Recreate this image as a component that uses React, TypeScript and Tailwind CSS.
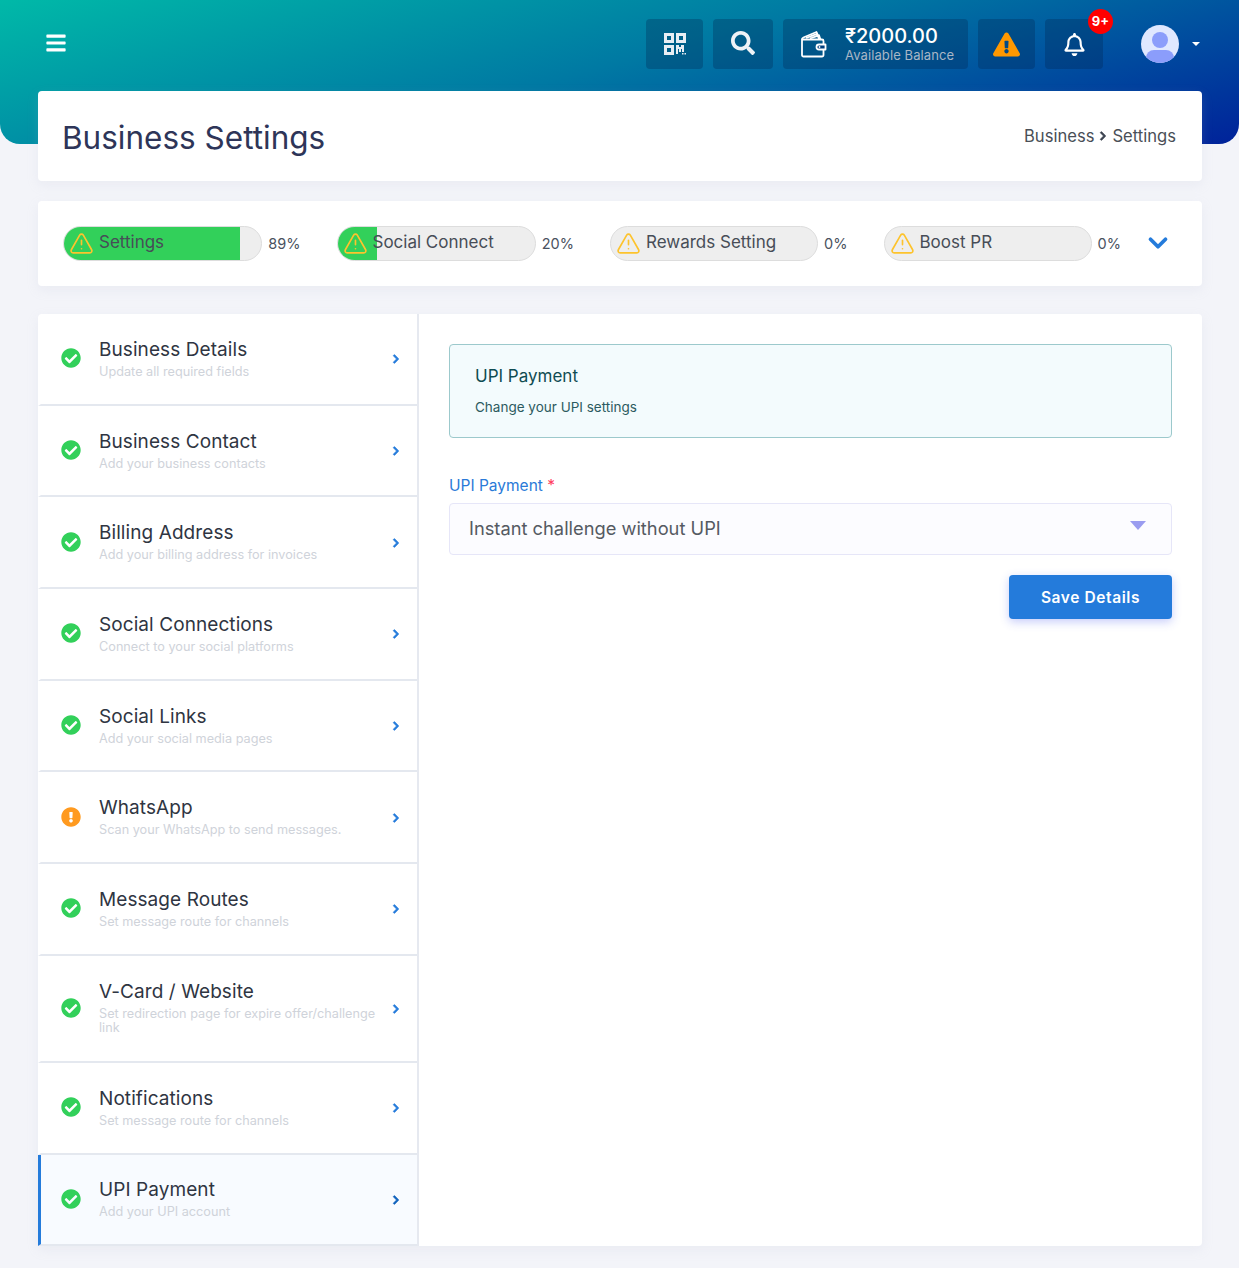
import { ChevronDown, TriangleAlert } from "lucide-react";
import {
  FaBars,
  FaCheckCircle,
  FaChevronRight,
  FaExclamationCircle,
  FaExclamationTriangle,
  FaRegBell,
  FaSearch,
} from "react-icons/fa";

const progress = [
  { label: "Settings", value: 89, width: "w-[89%]" },
  { label: "Social Connect", value: 20, width: "w-[20%]" },
  { label: "Rewards Setting", value: 0, width: "w-0" },
  { label: "Boost PR", value: 0, width: "w-0" },
];

const steps = [
  { title: "Business Details", sub: "Update all required fields" },
  { title: "Business Contact", sub: "Add your business contacts" },
  { title: "Billing Address", sub: "Add your billing address for invoices" },
  { title: "Social Connections", sub: "Connect to your social platforms" },
  { title: "Social Links", sub: "Add your social media pages" },
  { title: "WhatsApp", sub: "Scan your WhatsApp to send messages.", warn: true },
  { title: "Message Routes", sub: "Set message route for channels" },
  { title: "V-Card / Website", sub: "Set redirection page for expire offer/challenge link", tall: true },
  { title: "Notifications", sub: "Set message route for channels" },
  { title: "UPI Payment", sub: "Add your UPI account", active: true },
];

const QrIcon = () => (
  <svg width="22" height="22" viewBox="0 0 22 22" fill="none">
    <g stroke="#e8eef4" strokeWidth="3">
      <rect x="1.5" y="1.5" width="7" height="7" />
      <rect x="13.5" y="1.5" width="7" height="7" />
      <rect x="1.5" y="13.5" width="7" height="7" />
    </g>
    <path d="M12 12h3v2h2v-2h3v7h-2v-3h-1v3h-2v-3h-1v5h-2z" fill="#e8eef4" />
    <path d="M18 20h1.5v1.5H18zM20.5 20H22v1.5h-1.5z" fill="#e8eef4" />
  </svg>
);

const WalletIcon = () => (
  <svg width="28" height="28" viewBox="0 0 28 28" fill="none" stroke="#fff" strokeWidth="1.8" strokeLinejoin="round">
    <path d="M2 9.5h20a1.5 1.5 0 0 1 1.5 1.5v14a1.5 1.5 0 0 1-1.5 1.5H3.5A1.5 1.5 0 0 1 2 25z" />
    <path d="M2 9.5c0-1 .6-1.6 1.4-2L16.5 2l1.6 3.5" />
    <path d="M6 8l11-4.2L19 9M10 8.5l9-3.2 1.4 4" />
    <path d="M19 14.5h6.5v5H19a2.5 2.5 0 0 1 0-5z" fill="#00407f" />
    <circle cx="19.5" cy="17" r="0.9" fill="#fff" stroke="none" />
  </svg>
);

const Avatar = () => (
  <svg width="38" height="38" viewBox="0 0 38 38">
    <defs>
      <clipPath id="avatar-clip">
        <circle cx="19" cy="19" r="19" />
      </clipPath>
    </defs>
    <circle cx="19" cy="19" r="19" fill="#e0e8ff" />
    <g clipPath="url(#avatar-clip)" fill="#8b9dfb">
      <circle cx="19" cy="15" r="8" />
      <rect x="5" y="25" width="28" height="16" rx="8" />
    </g>
  </svg>
);

const TopButton = ({ className, children }: { className: string; children: React.ReactNode }) => (
  <div className={`flex h-[50px] items-center justify-center rounded-[4px] bg-[#01264f]/30 ${className}`}>
    {children}
  </div>
);

export default function App() {
  return (
    <div className="min-h-[1268px] bg-[#f3f4f9] font-['Inter',sans-serif] text-[#3b4250]">
      <header className="flex h-[144px] items-start rounded-b-[20px] bg-[linear-gradient(165deg,#00b9a8_0%,#0079a3_48%,#00229a_100%)] pt-[19px] pl-[45px] pr-[39px]">
        <FaBars className="mt-[13px] text-white" size={22} />
        <div className="ml-auto flex items-start gap-[10px]">
          <TopButton className="w-[57px]">
            <QrIcon />
          </TopButton>
          <TopButton className="w-[60px]">
            <FaSearch className="mb-[2px] text-[#eef3f7]" size={24} />
          </TopButton>
          <TopButton className="w-[185px] gap-[17px] justify-start pl-[17px]">
            <WalletIcon />
            <div className="-mt-[1px]">
              <p className="text-[20px] leading-[24px] font-medium text-white">₹2000.00</p>
              <p className="text-[13px] leading-[15px] tracking-[0.1px] text-[#a8b6c6]">Available Balance</p>
            </div>
          </TopButton>
          <TopButton className="w-[57px]">
            <FaExclamationTriangle className="text-[#ff9800]" size={27} />
          </TopButton>
          <div className="relative">
            <TopButton className="w-[58px]">
              <FaRegBell className="-mb-[1px] text-white" size={23} />
            </TopButton>
            <span className="absolute -top-[10px] -right-[10px] flex h-[25px] w-[25px] items-center justify-center rounded-full bg-[#ff0000] text-[13px] font-bold text-white">
              9+
            </span>
          </div>
          <div className="ml-[28px] mt-[6px] flex items-center gap-[13px]">
            <Avatar />
            <span className="h-0 w-0 border-x-[4px] border-t-[4px] border-x-transparent border-t-white" />
          </div>
        </div>
      </header>

      <main className="-mt-[53px] pl-[38px] pr-[37px] pb-[22px]">
        <section className="flex h-[90px] items-center justify-between rounded-[4px] bg-white pl-[25px] pr-[26px] shadow-[0_4px_12px_rgba(180,185,210,0.15)]">
          <h1 className="-ml-[1px] mt-[3px] text-[31.5px] font-normal text-[#2e3558]">Business Settings</h1>
          <div className="flex items-center gap-[4px] text-[16.6px] text-[#4a4f57]">
            Business
            <FaChevronRight size={10} stroke="currentColor" strokeWidth={40} className="text-[#3b4250]" />
            Settings
          </div>
        </section>

        <section className="mt-[20px] flex h-[85px] items-center rounded-[4px] bg-white pl-[25px] shadow-[0_4px_12px_rgba(180,185,210,0.15)]">
          <div className="grid w-[1058px] grid-cols-4 gap-[36px]">
            {progress.map((p) => (
              <div key={p.label} className="flex items-center gap-[6px]">
                <div className="relative h-[35px] flex-1 overflow-hidden rounded-full border border-[#dddddd] bg-[#eeeeee]">
                  <div className={`h-full bg-[#32d05a] ${p.width}`} />
                  <div className="absolute inset-0 flex items-center pl-[5px] pb-[1px]">
                    <TriangleAlert size={25} strokeWidth={1.6} className="shrink-0 text-[#fdc32d]" />
                    <span className="ml-[5px] text-[17px] text-[#474d57] whitespace-nowrap">{p.label}</span>
                  </div>
                </div>
                <span className="text-[14.5px] text-[#4a5260]">{p.value}%</span>
              </div>
            ))}
          </div>
          <ChevronDown size={30} strokeWidth={3} className="ml-[22px] -mt-[1px] text-[#247bdb]" />
        </section>

        <section className="mt-[28px] flex rounded-[4px] bg-white shadow-[0_4px_12px_rgba(180,185,210,0.15)]">
          <nav className="w-[381px] shrink-0 border-r-2 border-r-[#e6e9f0]">
            {steps.map((s) => (
              <div
                key={s.title}
                className={`flex items-center border-b-2 border-b-[#e4e8ef] border-l-[3px] pb-[20px] pt-[18px] pl-[20px] pr-[16px] ${
                  s.tall ? "min-h-[107px]" : "min-h-[91.7px]"
                } ${s.active ? "border-l-[#247bdb] bg-[#f8fbff]" : "border-l-transparent"}`}
              >
                {s.warn ? (
                  <FaExclamationCircle size={20} className="mt-[1px] shrink-0 text-[#ff9a1f]" />
                ) : (
                  <FaCheckCircle size={20} className="mt-[1px] shrink-0 text-[#32d05a]" />
                )}
                <div className="ml-[18px] flex-1">
                  <p className="text-[19px] leading-[26px] tracking-[0.08px] text-[#2f3542]">{s.title}</p>
                  <p className="mt-[2px] text-[12.7px] leading-[14px] text-[#cfd3da]">{s.sub}</p>
                </div>
                <FaChevronRight
                  size={10}
                  stroke="currentColor"
                  strokeWidth={40}
                  className={`mt-[3px] shrink-0 ${s.active ? "text-[#0f62bd]" : "text-[#247bdb]"}`}
                />
              </div>
            ))}
          </nav>

          <div className="flex-1 p-[30px]">
            <div className="h-[94px] rounded-[4px] border border-[#9cc9cc] bg-[#f3fbfd] px-[25px] pt-[19px]">
              <p className="text-[17px] leading-[24px] text-[#0f4c52]">UPI Payment</p>
              <p className="mt-[9px] text-[13.5px] leading-[20px] text-[#2c5a60]">Change your UPI settings</p>
            </div>
            <label className="mt-[37px] block text-[15.5px] leading-[22px] text-[#2a7ad8]">
              UPI Payment <span className="text-[#ff3b5c]">*</span>
            </label>
            <div className="mt-[6px] flex h-[52px] items-center justify-between rounded-[4px] border border-[#e6e6f8] bg-[#fcfcff] pl-[19px] pr-[25px]">
              <span className="text-[18.3px] text-[#555a62]">Instant challenge without UPI</span>
              <span className="mb-[8px] h-0 w-0 border-x-[8px] border-t-[9px] border-x-transparent border-t-[#9a9cf0]" />
            </div>
            <div className="mt-[20px] flex justify-end">
              <button className="h-[44px] w-[163px] rounded-[4px] bg-[#247bdb] pt-[1px] text-[15.5px] font-semibold tracking-[0.6px] text-white shadow-[0_3px_10px_rgba(70,90,240,0.3)]">
                Save Details
              </button>
            </div>
          </div>
        </section>
      </main>
    </div>
  );
}
